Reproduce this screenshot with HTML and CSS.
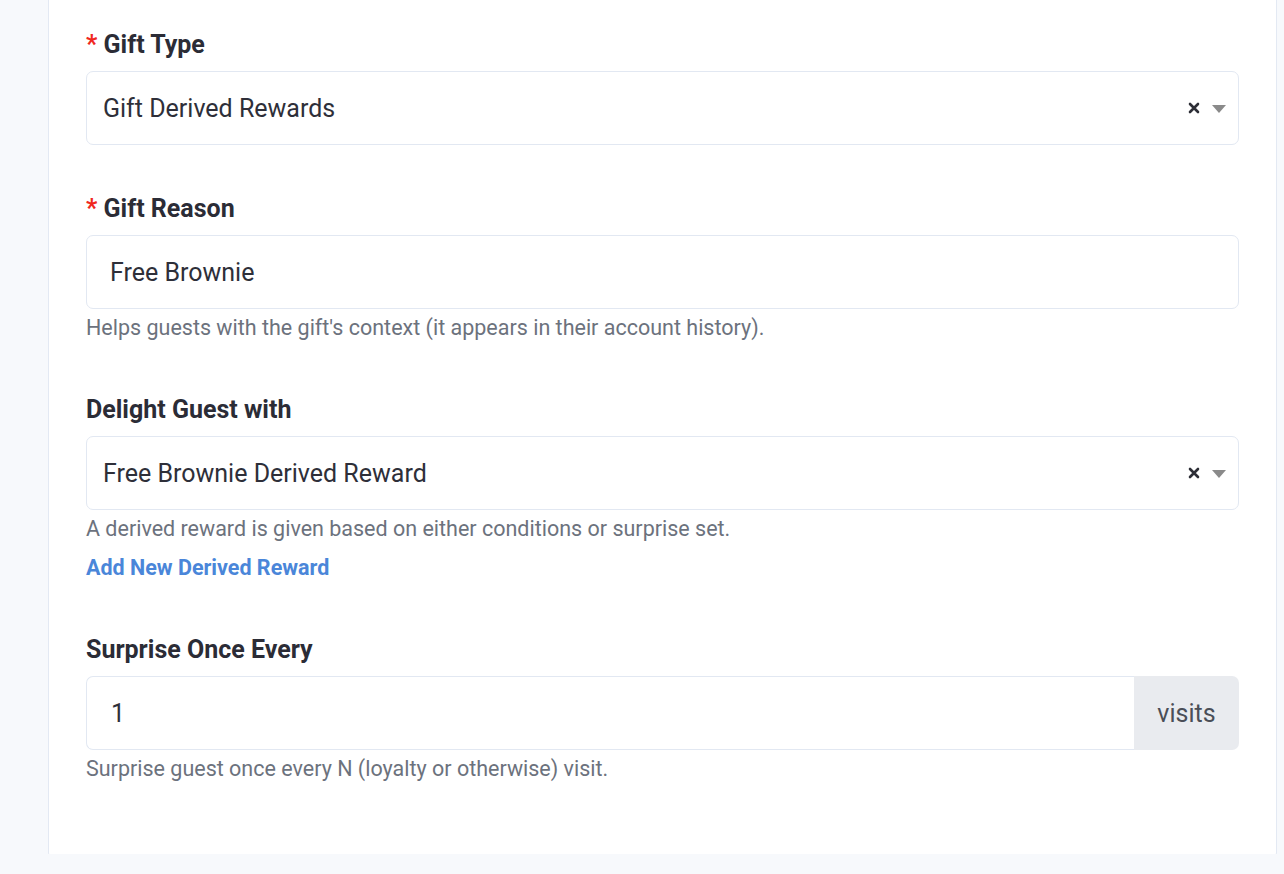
FILE: index.html
```html
<!DOCTYPE html>
<html>
<head>
<meta charset="utf-8">
<link rel="stylesheet" href="styles.css">
</head>
<body>
<div class="page">
  <div class="card">
    <div class="field">
      <div class="label"><span class="req">*</span> Gift Type</div>
      <div class="select">
        <span class="value">Gift Derived Rewards</span>
        <span class="controls">
          <svg class="clear" width="12" height="12" viewBox="0 0 12 12"><path d="M2 2L10 10M10 2L2 10" stroke="#2d2e36" stroke-width="2.6" stroke-linecap="round"/></svg>
          <svg class="caret" width="14" height="8" viewBox="0 0 14 8"><path d="M0 0H14L7 8Z" fill="#8a8a8a"/></svg>
        </span>
      </div>
    </div>

    <div class="field">
      <div class="label"><span class="req">*</span> Gift Reason</div>
      <div class="input"><span class="value">Free Brownie</span></div>
      <div class="help">Helps guests with the gift's context (it appears in their account history).</div>
    </div>

    <div class="field">
      <div class="label">Delight Guest with</div>
      <div class="select">
        <span class="value">Free Brownie Derived Reward</span>
        <span class="controls">
          <svg class="clear" width="12" height="12" viewBox="0 0 12 12"><path d="M2 2L10 10M10 2L2 10" stroke="#2d2e36" stroke-width="2.6" stroke-linecap="round"/></svg>
          <svg class="caret" width="14" height="8" viewBox="0 0 14 8"><path d="M0 0H14L7 8Z" fill="#8a8a8a"/></svg>
        </span>
      </div>
      <div class="help">A derived reward is given based on either conditions or surprise set.</div>
      <a class="link" href="#">Add New Derived Reward</a>
    </div>

    <div class="field last">
      <div class="label">Surprise Once Every</div>
      <div class="group">
        <div class="input grow"><span class="value">1</span></div>
        <div class="addon">visits</div>
      </div>
      <div class="help">Surprise guest once every N (loyalty or otherwise) visit.</div>
    </div>
  </div>
</div>
</body>
</html>
```

FILE: styles.css
```css
* { box-sizing: border-box; }
html, body {
  margin: 0;
  padding: 0;
  background: #f7f9fc;
  font-family: Roboto, "Liberation Sans", Arial, sans-serif;
  overflow: hidden;
}
.page {
  padding: 0 7px 0 48px;
  height: 874px;
}
.card {
  margin-top: -20px;
  background: #fff;
  border: 1px solid #e3e9f3;
  border-top: none;
  border-radius: 0 0 8px 8px;
  padding: 51px 37px 78px 37px;
}
.field { margin-bottom: 50px; }
.field.last { margin-bottom: 0; }
.label {
  font-size: 25px;
  font-weight: 700;
  line-height: 28px;
  color: #2b2c36;
  margin-bottom: 12px;
}
.req { color: #f0281e; }
.select, .input {
  height: 74px;
  border: 1px solid #e2e8f2;
  border-radius: 7px;
  display: flex;
  align-items: center;
  background: #fff;
}
.select { padding: 0 12px 0 16px; justify-content: space-between; }
.input { padding: 0 23px; }
.value {
  font-size: 25px;
  color: #2e2f39;
}
.controls { display: flex; align-items: center; gap: 12px; }
.clear { display: block; }
.caret { display: block; margin-top: 1px; }
.help {
  margin-top: 7px;
  font-size: 21.5px;
  line-height: 24px;
  color: #6c727d;
}
.field:has(.help) { margin-bottom: 56px; }
.field.last:has(.help) { margin-bottom: 0; }
.link {
  display: block;
  margin-top: 15px;
  font-size: 21.5px;
  line-height: 24px;
  font-weight: 700;
  color: #4a86d9;
  text-decoration: none;
}
.group { display: flex; height: 74px; }
.input.grow { flex: 1; border-radius: 7px 0 0 7px; border-right: none; padding-left: 24px; }
.addon {
  width: 105px;
  background: #e9ebef;
  border-radius: 0 7px 7px 0;
  display: flex;
  align-items: center;
  justify-content: center;
  font-size: 25px;
  color: #4a4e57;
}
```
